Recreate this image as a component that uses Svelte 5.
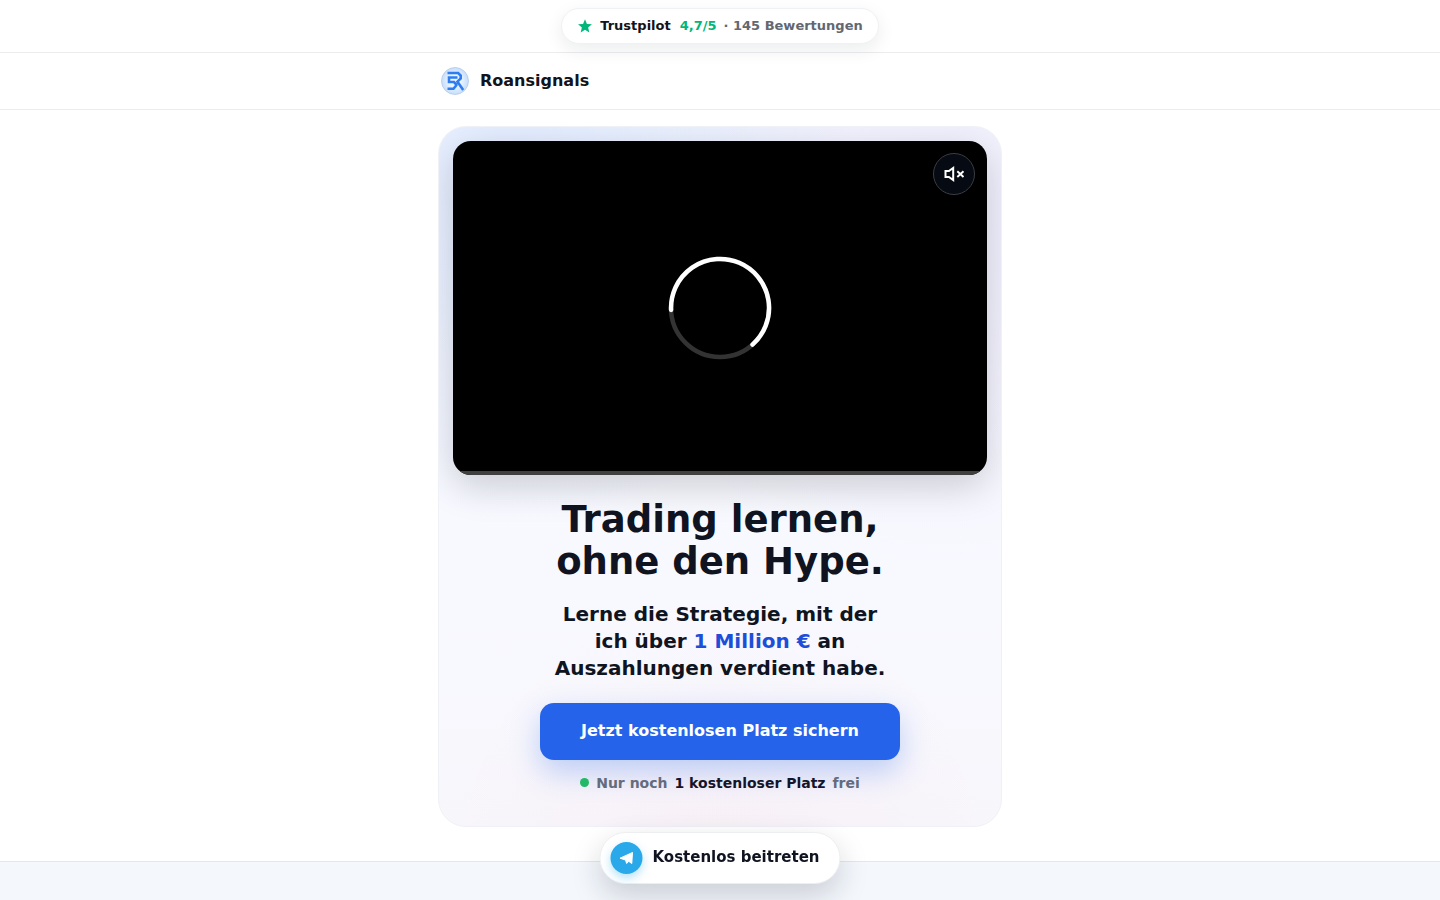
<script>
	const rating = '4,7/5'
	const reviews = 145
	const seats = 1
	let muted = $state(true)
</script>

<div class="page">
	<div class="topbar">
		<a class="trust" href="#bewertungen">
			<svg viewBox="0 0 24 24" width="16" height="16" aria-hidden="true">
				<path fill="#00b67a" d="M12 2l2.9 6.9 7.5.6-5.7 4.9 1.8 7.3L12 17.800l-6.500 3.900 1.800-7.300L1.600 9.500l7.500-.6z" />
			</svg>
			<strong>Trustpilot</strong>
			<span class="score">{rating}</span>
			<span class="count">· {reviews} Bewertungen</span>
		</a>
	</div>

	<header>
		<a class="brand" href="#start">
			<svg viewBox="0 0 30 30" width="30" height="30" aria-hidden="true">
				<defs>
					<radialGradient id="logo-bg">
						<stop offset="0.4" stop-color="#eef6ff" />
						<stop offset="1" stop-color="#c6ddfa" />
					</radialGradient>
				</defs>
				<circle cx="15" cy="15" r="13.500" fill="url(#logo-bg)" stroke="#b3cae8" stroke-width="0.8" />
				<path
					fill="none"
					stroke="#2f7df0"
					stroke-width="2.600"
					d="M7.500 7h10.700l2.500 2.500v3l-3.200 3.200 5.700 8.300M17.500 11.500H9v4.500h5l2.300 2.500v.8L13.500 22.800H7.500"
				/>
			</svg>
			<span>Roansignals</span>
		</a>
	</header>

	<main>
		<section class="card" id="start">
			<div class="video">
				<svg class="loader" viewBox="0 0 104 104" width="104" height="104" aria-hidden="true">
					<circle cx="52" cy="52" r="49" fill="none" stroke="#333" stroke-width="4.500" />
					<path
						d="M3.100 54A49 49 0 1 1 84.500 88.600"
						fill="none"
						stroke="#fff"
						stroke-width="4.500"
						stroke-linecap="round"
					/>
				</svg>
				<button class="mute" aria-label="Ton umschalten" aria-pressed={muted} onclick={() => (muted = !muted)}>
					<svg viewBox="0 0 22 22" width="22" height="22" fill="none" stroke="#fff" aria-hidden="true">
						<path stroke-width="2" d="M2.500 8h3.400l4.300-3v12l-4.300-3H2.500z" />
						{#if muted}
							<path stroke-width="1.900" d="M14.300 8.200l6.200 5.800m0-5.800l-6.200 5.800" />
						{/if}
					</svg>
				</button>
				<div class="progress"></div>
			</div>

			<h1>Trading lernen,<br />ohne den Hype.</h1>
			<p class="lead">
				Lerne die Strategie, mit der<br />ich über <em>1 Million €</em> an<br />Auszahlungen verdient habe.
			</p>
			<a class="cta" href="#beitreten">Jetzt kostenlosen Platz sichern</a>
			<p class="seats">
				<span class="dot"></span>
				<span>Nur noch</span>
				<strong>{seats} kostenloser Platz</strong>
				<span>frei</span>
			</p>
		</section>
	</main>

	<section class="next" id="bewertungen"></section>

	<a class="join" href="#beitreten">
		<span class="telegram">
			<svg viewBox="0 0 16 16" width="16" height="16" aria-hidden="true">
				<path
					fill="#fff"
					stroke="#fff"
					stroke-linejoin="round"
					d="M1.500 8.200L14 2.500 13.300 13.500 10.200 11.300 8.200 13.500 7 10z"
				/>
			</svg>
		</span>
		<span class="label">Kostenlos beitreten</span>
	</a>
</div>

<style>
	:global(body) {
		margin: 0;
		background: #fff;
	}
	.page {
		display: flex;
		flex-direction: column;
		min-height: 100vh;
		font-family: 'DejaVu Sans', sans-serif;
		color: #0f1420;
	}
	.page * {
		box-sizing: border-box;
	}
	a {
		color: inherit;
		text-decoration: none;
	}
	.topbar {
		display: flex;
		justify-content: center;
		padding: 8px 16px;
		border-bottom: 1px solid #ebecee;
	}
	.trust {
		display: flex;
		align-items: center;
		gap: 7px;
		padding: 8px 15px;
		border: 1px solid #f0f1f3;
		border-radius: 999px;
		background: #fff;
		box-shadow: 0 6px 18px rgba(15, 20, 32, 0.08);
		font-size: 13px;
		font-weight: 700;
		line-height: 18px;
	}
	.score {
		padding-left: 2px;
		color: #00b67a;
	}
	.count {
		color: #626871;
	}
	header {
		padding: 13px 16px;
		border-bottom: 1px solid #ebecee;
	}
	.brand {
		display: flex;
		align-items: center;
		gap: 10px;
		max-width: 560px;
		margin: 0 auto;
		font-weight: 700;
		font-size: 16px;
	}
	.brand span {
		padding-bottom: 2px;
	}
	main {
		padding: 16px 16px 34px;
	}
	.card {
		max-width: 564px;
		margin: 0 auto;
		padding: 14px 14px 33px;
		overflow: hidden;
		border: 1px solid #f0f1f7;
		border-radius: 28px;
		background:
			radial-gradient(circle at 15% 8%, rgba(59, 130, 246, 0.13), transparent 42%),
			radial-gradient(circle at 90% 12%, rgba(124, 92, 220, 0.08), transparent 45%),
			radial-gradient(circle at 50% 105%, rgba(244, 63, 94, 0.03), transparent 35%),
			linear-gradient(#f8faff, #f8f9ff 70%, #f7f6fb);
		text-align: center;
	}
	.video {
		position: relative;
		display: grid;
		place-items: center;
		aspect-ratio: 16 / 10;
		overflow: hidden;
		border-radius: 18px;
		background: #000;
		box-shadow: 0 12px 36px rgba(0, 0, 0, 0.17);
	}
	.mute {
		position: absolute;
		top: 12px;
		right: 12px;
		display: grid;
		place-items: center;
		width: 42px;
		height: 42px;
		padding: 0;
		border: 1px solid #3b3d42;
		border-radius: 50%;
		background: #060a12;
		cursor: pointer;
	}
	.progress {
		position: absolute;
		right: 0;
		bottom: 0;
		left: 0;
		height: 4px;
		background: #404040;
	}
	h1 {
		margin: 24px 0 18px;
		font-size: 37px;
		line-height: 42px;
	}
	.lead {
		margin: 0 0 21px;
		font-size: 20px;
		font-weight: 700;
		line-height: 27px;
	}
	.lead em {
		font-style: normal;
		color: #1d4ed8;
	}
	.cta {
		display: block;
		max-width: 360px;
		margin: 0 auto;
		padding: 15px 16px 17px;
		border-radius: 14px;
		background: #2563eb;
		box-shadow: 0 12px 30px rgba(37, 99, 235, 0.28);
		color: #fff;
		font-size: 16px;
		font-weight: 700;
		line-height: 25px;
	}
	.seats {
		display: flex;
		align-items: center;
		justify-content: center;
		gap: 7px;
		margin: 13px 0 0;
		color: #646b7c;
		font-size: 14px;
		font-weight: 700;
		line-height: 20px;
	}
	.seats strong {
		color: #14142b;
	}
	.dot {
		width: 9px;
		height: 9px;
		border-radius: 50%;
		background: #22b866;
	}
	.next {
		flex: 1;
		border-top: 1px solid #e3e6ea;
		background: #f4f8fd;
	}
	.join {
		position: fixed;
		bottom: 16px;
		left: 50%;
		display: flex;
		align-items: center;
		gap: 10px;
		padding: 9px 20px 9px 10px;
		border: 1px solid #eceef0;
		border-radius: 999px;
		background: #fff;
		box-shadow: 0 12px 30px rgba(15, 20, 32, 0.18);
		font-size: 15px;
		font-weight: 700;
		white-space: nowrap;
		transform: translateX(-50%);
	}
	.label {
		padding-bottom: 2px;
	}
	.telegram {
		display: grid;
		place-items: center;
		width: 32px;
		height: 32px;
		border-radius: 50%;
		background: #29a9ea;
		box-shadow: 0 4px 10px rgba(41, 169, 234, 0.35);
	}
</style>
